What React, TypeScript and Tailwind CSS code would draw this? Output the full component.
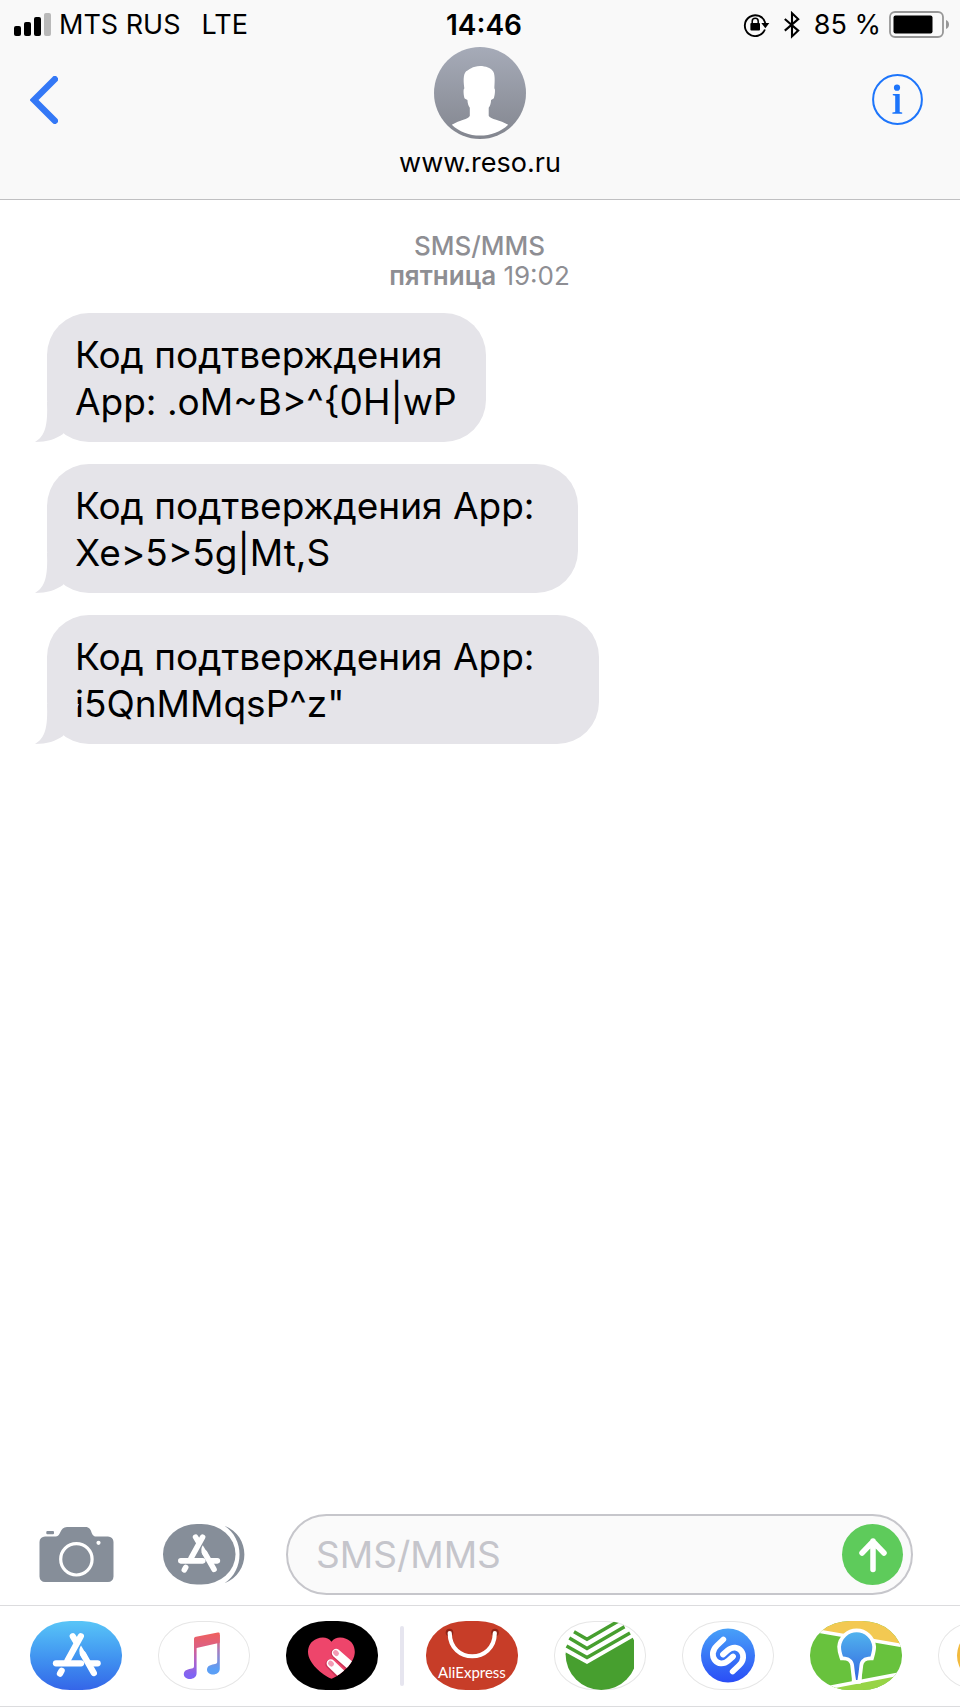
import React, { ReactNode, useState } from 'react';

type Message = {
    lines: string[];
    width: string;
};

const MESSAGES: Message[] = [
    {
        lines: ['Код подтверждения', 'App: .oM~B>^{0H|wP'],
        width: 'w-[439px]',
    },
    {
        lines: ['Код подтверждения App:', 'Xe>5>5g|Mt,S'],
        width: 'w-[531px]',
    },
    {
        lines: ['Код подтверждения App:', 'i5QnMMqsP^z"'],
        width: 'w-[552px]',
    },
];

const SignalIcon = () => (
    <svg className="h-6 w-[38px]" viewBox="0 0 38 24" aria-hidden="true">
        <rect x="0" y="13" width="7" height="10" rx="2" />
        <rect x="10" y="9" width="7" height="14" rx="2" />
        <rect x="20" y="4" width="7" height="19" rx="2" />
        <rect x="30" y="0" width="7" height="23" rx="2" fill="#b9b9b9" />
    </svg>
);

const RotationLockIcon = () => (
    <svg className="h-6 w-[27px]" viewBox="0 0 27 24" aria-hidden="true">
        <path
            d="M21.9 16.5A10.4 10.4 0 1 1 22.3 10"
            fill="none"
            stroke="black"
            strokeWidth="1.9"
        />
        <path d="M18.3 10h8L22.4 15.2z" />
        <rect x="7.4" y="10" width="9.6" height="7.4" rx="1" />
        <path
            d="M9.2 10.5V8.3a3 3 0 0 1 6 0v2.2"
            fill="none"
            stroke="black"
            strokeWidth="1.5"
        />
    </svg>
);

const BluetoothIcon = () => (
    <svg className="h-7 w-4" viewBox="0 0 16 28" aria-hidden="true">
        <path
            d="M.8 8 14.2 19.6 8 25.4V2.2l6.2 5.9L.8 19.6"
            fill="none"
            stroke="black"
            strokeWidth="2.1"
        />
    </svg>
);

const BatteryIcon = () => (
    <svg className="h-[27px] w-[61px]" viewBox="0 0 61 27" aria-hidden="true">
        <rect
            x="1"
            y="1"
            width="53"
            height="25"
            rx="5"
            fill="none"
            stroke="#979797"
            strokeWidth="1.8"
        />
        <rect x="4.5" y="4.5" width="39" height="18" rx="2" />
        <path d="M57 9c4 1.5 4 7.5 0 9z" fill="#979797" />
    </svg>
);

const Avatar = () => (
    <svg className="h-[92px] w-[92px]" viewBox="0 0 93 93" aria-hidden="true">
        <defs>
            <linearGradient id="avatar" x1="0" y1="0" x2="0" y2="1">
                <stop offset="0" stopColor="#a6abb8" />
                <stop offset="1" stopColor="#83868f" />
            </linearGradient>
        </defs>
        <circle cx="46.5" cy="46.5" r="46.5" fill="url(#avatar)" />
        <path
            fill="white"
            d="M46.5 19.3C52 19.3 58 21.5 60 25C62 29 61.3 36 61 42C62.3 42 61.5 50 60.3 52L57.7 53.5C57.5 57 56.8 59.5 55.3 61.5V69.5C57 73 67 74 75 78.5C68 85.5 57 89.5 46.5 89.5S25 85.5 18 78.5C26 74 35 73 36.2 69.5V61.5C34.8 59.5 34 57 33.8 53.5L31 52C30 50 29.3 42 30.7 42C30 36 29 28 32.5 24.5C35 23.5 39 19.3 46.5 19.3Z"
        />
    </svg>
);

const InfoIcon = () => (
    <svg className="h-[51px] w-[51px]" viewBox="0 0 51 51" aria-hidden="true">
        <circle
            cx="25.5"
            cy="25.5"
            r="24.4"
            fill="none"
            stroke="#1d75fb"
            strokeWidth="2"
        />
        <circle cx="25" cy="13.7" r="3.1" fill="#1d75fb" />
        <path
            fill="#1d75fb"
            d="M20.8 20h6.9v18l2.5.5v1.2h-9.8v-1.2l2.8-.5V21.7l-2.4-.5z"
        />
    </svg>
);

const CameraIcon = () => (
    <svg className="h-[55px] w-[75px]" viewBox="0 0 75 55" aria-hidden="true">
        <g fill="#868e99">
            <rect x="7.3" y="4" width="7.7" height="3.2" rx="1" />
            <path d="M6 9.5H17C22 9.5 20.5 0 28 0H46.5C54 0 51 9.5 57 9.5H69a5.5 5.5 0 0 1 5.5 5.5V49.5a5.5 5.5 0 0 1-5.5 5.5H6A5.5 5.5 0 0 1 .5 49.5V15A5.5 5.5 0 0 1 6 9.5Z" />
        </g>
        <circle
            cx="37.4"
            cy="32.3"
            r="15.7"
            fill="none"
            stroke="white"
            strokeWidth="3.2"
        />
        <circle cx="59.5" cy="15.8" r="2.1" fill="white" />
    </svg>
);

// The three sticks of the App Store logo, drawn for a 92x69 tile
const StoreGlyph = () => (
    <g fill="none" stroke="white" strokeWidth="6.3" strokeLinecap="round">
        <path d="M50.8 15.3 37.5 39.5" />
        <path d="M42.8 15.3 46 20.5" />
        <path d="M26 42.3H51" />
        <path d="M60 42.3H67.6" />
        <path d="M53 33 63.8 52" />
        <path d="M31.6 49.8 30 52.6" />
        <path
            d="M51 24.5 57 34.5 51.5 36.5C49 32 48.5 28.5 51 24.5Z"
            fill="white"
            stroke="none"
        />
    </g>
);

const AppDrawerIcon = () => (
    <svg className="h-[61px] w-[82px]" viewBox="0 0 82 61" aria-hidden="true">
        <rect width="72.5" height="60.5" rx="34" ry="30" fill="#868e99" />
        <path
            d="M61.5 1.8C88 12 88 49 61.5 59.2C81.5 46 81.5 15 61.5 1.8Z"
            fill="#868e99"
        />
        <g transform="translate(36 29.3) scale(.88) translate(-46.7 -33.7)">
            <StoreGlyph />
        </g>
    </svg>
);

const TileArt = ({ children }: { children: ReactNode }) => (
    <svg className="h-full w-full" viewBox="0 0 92 69" aria-hidden="true">
        {children}
    </svg>
);

const MusicArt = () => (
    <TileArt>
        <defs>
            <linearGradient
                id="noteLeft"
                gradientUnits="userSpaceOnUse"
                x1="0"
                y1="22"
                x2="0"
                y2="54"
            >
                <stop offset="0" stopColor="#e8606f" />
                <stop offset=".5" stopColor="#b562c4" />
                <stop offset="1" stopColor="#8064f3" />
            </linearGradient>
            <linearGradient
                id="noteRight"
                gradientUnits="userSpaceOnUse"
                x1="0"
                y1="14"
                x2="0"
                y2="48"
            >
                <stop offset="0" stopColor="#ee5f63" />
                <stop offset=".45" stopColor="#a77dbd" />
                <stop offset="1" stopColor="#5b9ff6" />
            </linearGradient>
            <linearGradient id="noteBar" x1="0" y1="0" x2="0" y2="1">
                <stop offset="0" stopColor="#f0605c" />
                <stop offset="1" stopColor="#d9608a" />
            </linearGradient>
        </defs>
        <path
            d="M36 18h2.6v34c0 8-12.8 7.5-12.8 1.2 0-4.5 5-5 8-5.7 1.6-.4 2.2-1 2.2-2.5z"
            fill="url(#noteLeft)"
        />
        <path
            d="M59.2 14h2.6v33.5c0 8-12.8 7.5-12.8 1.2 0-4.5 5-5 8-5.7 1.6-.4 2.2-1 2.2-2.5z"
            fill="url(#noteRight)"
        />
        <path
            d="M36 18c0-1.4.6-2 2-2.3l21.8-4.2c1.4-.3 2 .3 2 1.5v8.8L38.6 26.9 36 28z"
            fill="url(#noteBar)"
        />
    </TileArt>
);

const HEART =
    'M45.5 20.7C42 16 36 15.5 31 17.8C25 20 22 25 22 31C22 42 36 54 45.5 57.7C55 54 68.8 42 68.8 31C68.8 25 66 20 60 17.8C55 15.5 49 16 45.5 20.7Z';

const HeartArt = () => (
    <TileArt>
        <clipPath id="heart">
            <path d={HEART} />
        </clipPath>
        <path d={HEART} fill="#ee456b" />
        <g clipPath="url(#heart)" fill="none" strokeLinecap="round">
            <path
                d="M49.2 32.2 68 50M43.8 43 60 60"
                stroke="#c93556"
                strokeWidth="9"
            />
            <path
                d="M50 32 70 49.5M44.8 42.5 62 59"
                stroke="white"
                strokeWidth="8.4"
            />
            <path
                d="M49.5 31.6 50.5 32.6M44.5 42.2 45.5 43"
                stroke="#f39ab4"
                strokeWidth="5"
            />
        </g>
    </TileArt>
);

const BagHandle = () => (
    <TileArt>
        <circle cx="23.5" cy="11.5" r="3.8" fill="#8f2316" />
        <circle cx="69" cy="11.5" r="3.8" fill="#8f2316" />
        <path
            d="M23.7 12C24 43 68.5 43 68.8 12"
            fill="none"
            stroke="white"
            strokeWidth="4.2"
            strokeLinecap="round"
        />
    </TileArt>
);

const SberArt = () => (
    <TileArt>
        <clipPath id="sber">
            <circle cx="47.3" cy="33.3" r="35.7" />
        </clipPath>
        <g clipPath="url(#sber)">
            <path d="M10 30.4 33 43 80 16V69H10Z" fill="#479f2f" />
        </g>
        <path
            d="M12.5 25 33 36.5 76 12M15.3 17 33 27.5 70.5 5.8M20 10.7 33 18.3 64.5 0"
            fill="none"
            stroke="#479f2f"
            strokeWidth="3.4"
        />
    </TileArt>
);

const ShazamArt = () => (
    <TileArt>
        <defs>
            <linearGradient id="shazam" x1="0" y1="0" x2="0" y2="1">
                <stop offset="0" stopColor="#48a1f8" />
                <stop offset="1" stopColor="#2a4df6" />
            </linearGradient>
        </defs>
        <circle cx="46" cy="34.5" r="27" fill="url(#shazam)" />
        <g fill="none" stroke="white" strokeWidth="5.8" strokeLinecap="round">
            <path d="M41.3 18.5 35 24.5C24.5 34.5 36 48.5 46.5 39.5L51 35.5" />
            <path d="M50.7 50.5 57 44.5C67.5 34.5 56 20.5 45.5 29.5L41 33.5" />
        </g>
    </TileArt>
);

const MapsArt = () => (
    <TileArt>
        <defs>
            <linearGradient id="pin" x1="0" y1="0" x2="0" y2="1">
                <stop offset="0" stopColor="#51b3ee" />
                <stop offset="1" stopColor="#3468e0" />
            </linearGradient>
        </defs>
        <path d="M0 0H92V24.5L0 8.7Z" fill="#f3c952" />
        <path d="M0 70 92 52.5V69H0Z" fill="#97d446" />
        <path
            d="M0 8.7 92 24.5M0 70 92 52.5"
            stroke="white"
            strokeWidth="3.6"
        />
        <path d="M41.8 40H51.7V60L41.8 62Z" fill="white" />
        <path
            d="M31 25.7A15.7 15.7 0 0 1 62.3 25.7C62.3 29 61.5 32 60.5 35.5C54 35.5 50 39 49.5 44C49 49 48.3 54 47.5 59H46C45.2 54 44.5 49 44 44C43.5 39 39 35.5 33 35.5C31.8 32 31 29 31 25.7Z"
            fill="url(#pin)"
            stroke="white"
            strokeWidth="7.5"
            className="[paint-order:stroke]"
        />
    </TileArt>
);

type AppTileProps = {
    name: string;
    className: string;
    children: ReactNode;
};

const AppTile = ({ name, className, children }: AppTileProps) => (
    <button
        type="button"
        aria-label={name}
        className={`relative h-[69px] w-[92px] shrink-0 overflow-hidden rounded-[40px/34px] ${className}`}
    >
        {children}
    </button>
);

const Header = () => (
    <header className="border-b border-[#c0c0c2] bg-[#f9f9f9]">
        <div className="grid h-[47px] grid-cols-3 items-center pt-[2px] pr-[10px] pl-[14px] text-[27px] leading-8">
            <div className="flex items-center whitespace-nowrap">
                <SignalIcon />
                <span className="ml-[7px]">MTS RUS</span>
                <span className="ml-[21px]">LTE</span>
            </div>
            <time className="ml-1 text-center text-[28px] font-semibold">
                14:46
            </time>
            <div className="flex items-center justify-end whitespace-nowrap">
                <RotationLockIcon />
                <span className="ml-[14px]">
                    <BluetoothIcon />
                </span>
                <span className="mr-2 ml-[14px]">85 %</span>
                <BatteryIcon />
            </div>
        </div>
        <div className="grid grid-cols-3 items-start pr-[37px] pb-5 pl-[30px]">
            <button
                type="button"
                aria-label="Назад"
                className="mt-[29px] justify-self-start"
            >
                <svg
                    className="h-12 w-7"
                    viewBox="0 0 28 48"
                    aria-hidden="true"
                >
                    <path
                        d="M24.8 3.2 4 24 24.8 44.8"
                        fill="none"
                        stroke="#3478f6"
                        strokeWidth="6.4"
                        strokeLinecap="round"
                    />
                </svg>
            </button>
            <div className="flex flex-col items-center justify-self-center pl-[7px]">
                <Avatar />
                <h1 className="mt-2 text-[27px] leading-8">www.reso.ru</h1>
            </div>
            <button
                type="button"
                aria-label="Информация"
                className="mt-[27px] justify-self-end"
            >
                <InfoIcon />
            </button>
        </div>
    </header>
);

const Bubble = ({ lines, width }: Message) => (
    <li
        className={`relative max-w-full rounded-[42px] bg-[#e5e4e9] pt-[18px] pb-[17px] pl-7 text-[37px] leading-[47px] whitespace-nowrap ${width}`}
    >
        {lines.map((line) => (
            <p key={line}>{line}</p>
        ))}
        <svg
            className="absolute bottom-0 -left-3 h-10 w-11"
            viewBox="0 0 44 40"
            aria-hidden="true"
        >
            <path
                d="M12 0C13 24 10 34 0 40C12 40 21 37 28 32L44 0Z"
                fill="#e5e4e9"
            />
        </svg>
    </li>
);

const Composer = () => {
    const [text, setText] = useState('');

    return (
        <form
            className="flex items-center pr-[47px] pb-[10px] pl-[39px]"
            onSubmit={(e) => {
                e.preventDefault();
                setText('');
            }}
        >
            <button type="button" aria-label="Камера">
                <CameraIcon />
            </button>
            <button type="button" aria-label="Приложения" className="ml-[49px]">
                <AppDrawerIcon />
            </button>
            <div className="ml-[41px] flex h-[81px] min-w-0 flex-1 items-center rounded-full border-2 border-[#c6c6cb] bg-[#fafafa] pr-2 pl-7">
                <input
                    type="text"
                    aria-label="SMS/MMS"
                    placeholder="SMS/MMS"
                    value={text}
                    onChange={(e) => setText(e.target.value)}
                    className="min-w-0 flex-1 bg-transparent text-[37px] leading-[47px] outline-none placeholder:text-[#c5c5cb]"
                />
                <button
                    type="submit"
                    aria-label="Отправить"
                    className="flex h-[61px] w-[61px] shrink-0 items-center justify-center rounded-full bg-[#5ecb5b]"
                >
                    <svg
                        className="h-9 w-7"
                        viewBox="0 0 28 36"
                        aria-hidden="true"
                    >
                        <path
                            d="M14 32.5V4M3 16 14 4.5 25 16"
                            fill="none"
                            stroke="white"
                            strokeWidth="5.5"
                            strokeLinecap="round"
                            strokeLinejoin="round"
                        />
                    </svg>
                </button>
            </div>
        </form>
    );
};

const AppStrip = () => (
    <nav
        aria-label="Приложения iMessage"
        className="flex items-center overflow-hidden border-y border-[#dcdcde] pt-[15px] pb-4 pl-[30px]"
    >
        <div className="flex gap-9">
            <AppTile
                name="App Store"
                className="bg-linear-to-b from-[#59c5f7] to-[#3565e8]"
            >
                <TileArt>
                    <StoreGlyph />
                </TileArt>
            </AppTile>
            <AppTile name="Музыка" className="ring-1 ring-[#e6e6e6] ring-inset">
                <MusicArt />
            </AppTile>
            <AppTile name="Digital Touch" className="bg-black">
                <HeartArt />
            </AppTile>
        </div>
        <div className="mx-[22px] h-[60px] w-1 shrink-0 rounded-full bg-[#e6e5ef]" />
        <div className="flex gap-9">
            <AppTile name="AliExpress" className="bg-[#c73d28]">
                <BagHandle />
                <span className="absolute inset-x-0 bottom-2 text-center font-['Lato',sans-serif] text-[15px] leading-5 text-white">
                    AliExpress
                </span>
            </AppTile>
            <AppTile name="Сбербанк" className="ring-1 ring-[#e6e6e6] ring-inset">
                <SberArt />
            </AppTile>
            <AppTile name="Shazam" className="ring-1 ring-[#e6e6e6] ring-inset">
                <ShazamArt />
            </AppTile>
            <AppTile name="2ГИС" className="bg-[#68c23d]">
                <MapsArt />
            </AppTile>
            <AppTile name="Ещё" className="ring-1 ring-[#e6e6e6] ring-inset">
                <TileArt>
                    <circle cx="46" cy="34.5" r="27" fill="#f2ba3d" />
                </TileArt>
            </AppTile>
        </div>
    </nav>
);

const App = () => (
    <div className="flex min-h-screen flex-col overflow-x-hidden bg-white font-['Inter','Liberation_Sans',sans-serif] text-black">
        <Header />
        <main className="flex-1 pt-[31px] pr-12 pb-8 pl-[47px]">
            <div className="text-center text-[26px] leading-[30px] text-[#8e8e93]">
                <p className="font-medium">SMS/MMS</p>
                <p>
                    <span className="font-semibold">пятница</span> 19:02
                </p>
            </div>
            <ul className="mt-[22px] flex flex-col gap-[22px]">
                {MESSAGES.map((message) => (
                    <Bubble key={message.lines[1]} {...message} />
                ))}
            </ul>
        </main>
        <footer>
            <Composer />
            <AppStrip />
        </footer>
    </div>
);

export default App;
